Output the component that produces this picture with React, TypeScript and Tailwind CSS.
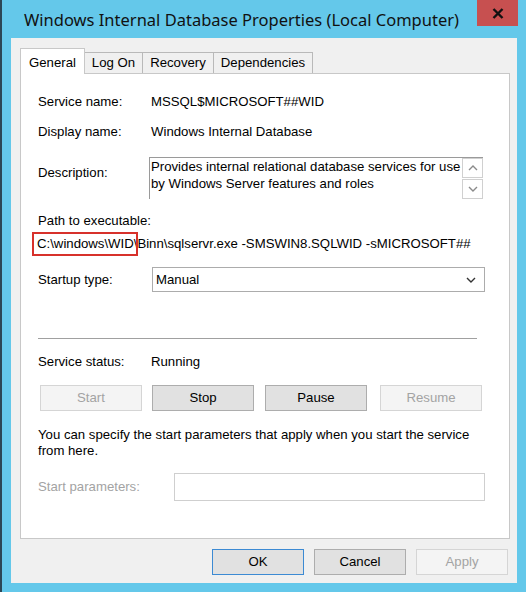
import React from 'react';

const font = { fontFamily: '"Liberation Sans", Arial, sans-serif' };

const Btn: React.FC<{ label: string; disabled?: boolean }> = ({ label, disabled }) => (
  <div
    className={`flex h-[26px] w-[102px] items-center justify-center border ${
      disabled
        ? 'border-[#d5d5d5] bg-[#f4f4f4] text-[#a3a3a3]'
        : 'border-[#adadad] bg-[#e1e1e1] text-black'
    }`}
  >
    {label}
  </div>
);

const Chevron: React.FC<{ up?: boolean; className?: string }> = ({ up, className }) => (
  <svg width="10" height="6" viewBox="0 0 10 6" className={className}>
    <path
      d={up ? 'M1 5 L5 1 L9 5' : 'M1 1 L5 5 L9 1'}
      fill="none"
      stroke="currentColor"
      strokeWidth="1.4"
    />
  </svg>
);

export default function App() {
  return (
    <div className="flex h-[592px] w-[526px] border-l-2 border-[#2c4755] bg-[#64c8ea]" style={font}>
      <div className="flex w-full flex-col">
        {/* title bar */}
        <div className="flex h-[38px] shrink-0 items-start">
          <div
            className="ml-[22px] mt-[10px] text-[16.5px] leading-[20px] text-[#111]"
            style={{ fontFamily: '"Noto Sans", "Open Sans", sans-serif' }}
          >
            Windows Internal Database Properties (Local Computer)
          </div>
          <div className="ml-auto mr-[8px] flex h-[26px] w-[41px] items-center justify-center bg-[#c75050]">
            <svg width="12" height="11" viewBox="0 0 12 11">
              <path d="M1.5 1 L10.5 10 M10.5 1 L1.5 10" stroke="#111" strokeWidth="2.4" />
            </svg>
          </div>
        </div>

        {/* client */}
        <div className="ml-[9px] mr-[9px] mb-[9px] flex flex-1 flex-col bg-[#f0f0f0] pl-[9px] pt-[10px] text-[13.2px]">
          {/* tabs */}
          <div className="flex h-[25px] items-end">
            <div className="relative z-10 -mb-px flex h-[26px] w-[65px] items-start justify-center border border-b-0 border-[#c8c8c8] bg-white pt-[4px]">
              General
            </div>
            <div className="flex h-[21px] w-[58px] items-center justify-center border border-b-0 border-l-0 border-[#b9b9b9] bg-[#f0f0f0]">
              Log On
            </div>
            <div className="flex h-[21px] w-[71px] items-center justify-center border border-b-0 border-l-0 border-[#b9b9b9] bg-[#f0f0f0]">
              Recovery
            </div>
            <div className="flex h-[21px] w-[99px] items-center justify-center border border-b-0 border-l-0 border-[#b9b9b9] bg-[#f0f0f0]">
              Dependencies
            </div>
          </div>

          {/* panel */}
          <div className="flex h-[466px] w-[490px] flex-col border border-[#c8c8c8] bg-white pl-[17px] pt-[20px] text-black">
            <div className="flex h-[16px] items-center">
              <div className="w-[113px]">Service name:</div>
              <div>MSSQL$MICROSOFT##WID</div>
            </div>
            <div className="mt-[14px] flex h-[16px] items-center">
              <div className="w-[113px]">Display name:</div>
              <div>Windows Internal Database</div>
            </div>
            <div className="mt-[17px] flex h-[42px] items-start">
              <div className="w-[111px] pt-[6px]">Description:</div>
              <div className="flex h-[42px] w-[334px] border-l border-t border-[#9a9a9a]">
                <div className="flex-1 whitespace-nowrap pl-[1px] leading-[17px]">
                  <div>Provides internal relational database services for use</div>
                  <div>by Windows Server features and roles</div>
                </div>
                <div className="flex w-[21px] flex-col">
                  <div className="flex h-[20px] items-center justify-center border border-[#d0d0d0] text-[#8a8a8a]">
                    <Chevron up />
                  </div>
                  <div className="mt-[1px] flex h-[20px] items-center justify-center border border-[#d0d0d0] text-[#8a8a8a]">
                    <Chevron />
                  </div>
                </div>
              </div>
            </div>
            <div className="mt-[14px] h-[16px] leading-[16px]">Path to executable:</div>
            <div className="relative -ml-[6px] mt-[3px] flex h-[24px] w-[454px] items-center whitespace-nowrap">
              <span className="pl-[5px]">C:\windows\WID\Binn\sqlservr.exe -SMSWIN8.SQLWID -sMICROSOFT##</span>
              <div className="absolute left-0 top-0 h-[24px] w-[106px] border-2 border-[#d7312b]" />
            </div>
            <div className="mt-[11px] flex h-[25px] items-center">
              <div className="w-[114px]">Startup type:</div>
              <div className="flex h-[25px] w-[333px] items-center border border-[#acacac] pl-[3px] pr-[8px]">
                <span>Manual</span>
                <Chevron className="ml-auto text-[#333]" />
              </div>
            </div>
            <div className="mt-[46px] h-[2px] w-[439px] border-t border-b border-t-[#a0a0a0] border-b-white" />
            <div className="mt-[14px] flex h-[16px] items-center">
              <div className="w-[113px]">Service status:</div>
              <div>Running</div>
            </div>
            <div className="mt-[15px] ml-[2px] flex h-[26px] gap-[10px]">
              <Btn label="Start" disabled />
              <Btn label="Stop" />
              <div className="ml-[1px]">
                <Btn label="Pause" />
              </div>
              <div className="ml-[3px]">
                <Btn label="Resume" disabled />
              </div>
            </div>
            <div className="mt-[16px] leading-[16px]">
              <div>You can specify the start parameters that apply when you start the service</div>
              <div>from here.</div>
            </div>
            <div className="mt-[14px] flex h-[28px] items-center">
              <div className="w-[136px] text-[#a3a3a3]">Start parameters:</div>
              <div className="h-[28px] w-[311px] border border-[#cfcfcf] bg-white" />
            </div>
          </div>

          {/* bottom buttons */}
          <div className="mt-[10px] flex justify-end gap-[10px] pr-[9px]">
            <div className="flex h-[26px] w-[92px] items-center justify-center border border-[#3c8ad3] bg-[#e1e1e1]">
              OK
            </div>
            <div className="flex h-[26px] w-[92px] items-center justify-center border border-[#adadad] bg-[#e1e1e1]">
              Cancel
            </div>
            <div className="flex h-[26px] w-[92px] items-center justify-center border border-[#d5d5d5] bg-[#f4f4f4] text-[#a3a3a3]">
              Apply
            </div>
          </div>
        </div>
      </div>
    </div>
  );
}
